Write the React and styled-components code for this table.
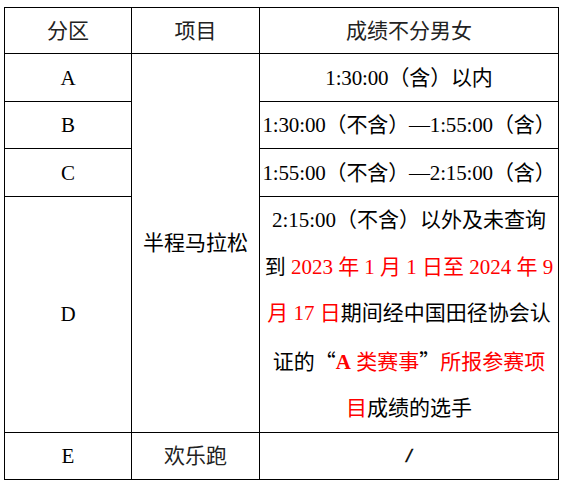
import React from "react";
import styled, { createGlobalStyle } from "styled-components";

const GlobalStyle = createGlobalStyle`
  html, body {
    margin: 0;
    padding: 0;
    background: #fff;
  }
  body {
    font-family: "Liberation Serif", "Noto Sans CJK SC", serif;
    color: #000;
  }
`;

const Page = styled.div`
  padding: 7px 0 0 4px;
`;

const Table = styled.table`
  border-collapse: collapse;
  width: 554px;
  table-layout: fixed;
  font-size: 21px;
`;

const Cell = styled.td`
  border: 1px solid #000;
  text-align: center;
  vertical-align: middle;
  height: ${({ $h }) => $h || 46}px;
  padding: 0;
  line-height: ${({ $lh }) => $lh || "24px"};
  white-space: nowrap;
  letter-spacing: ${({ $tight }) => ($tight ? "-0.15px" : "normal")};
  color: ${({ $muted }) => ($muted ? "#222" : "#000")};
`;

const Red = styled.span`
  color: #ff0000;
  font-weight: ${({ $bold }) => ($bold ? "bold" : "normal")};
`;

const Quote = styled.span`
  font-family: "Noto Sans CJK SC", serif;
`;

const Slash = styled.span`
  font-family: "Liberation Sans", sans-serif;
  font-style: italic;
  font-size: 19px;
  -webkit-text-stroke: 0.4px #000;
`;

const rows = [
  { zone: "A", text: "1:30:00（含）以内", h: 47 },
  { zone: "B", text: "1:30:00（不含）—1:55:00（含）", h: 46 },
  { zone: "C", text: "1:55:00（不含）—2:15:00（含）", h: 47 },
];

export default function App() {
  return (
    <Page>
      <GlobalStyle />
      <Table>
        <colgroup>
          <col style={{ width: 127 }} />
          <col style={{ width: 128 }} />
          <col style={{ width: 299 }} />
        </colgroup>
        <tbody>
          <tr>
            <Cell $h={45} $muted>分区</Cell>
            <Cell $h={45} $muted>项目</Cell>
            <Cell $h={45} $muted>成绩不分男女</Cell>
          </tr>
          {rows.map((r, i) => (
            <tr key={r.zone}>
              <Cell $h={r.h}>{r.zone}</Cell>
              {i === 0 && <Cell rowSpan={4}>半程马拉松</Cell>}
              <Cell $h={r.h} $tight>{r.text}</Cell>
            </tr>
          ))}
          <tr>
            <Cell $h={233}>D</Cell>
            <Cell $h={233} $lh="46.6px">
              2:15:00（不含）以外及未查询
              <br />
              到 <Red>2023 年 1 月 1 日至 2024 年 9</Red>
              <br />
              <Red>月 17 日</Red>期间经中国田径协会认
              <br />
              证的<Quote>“</Quote>
              <Red $bold>A</Red>
              <Red> 类赛事</Red>
              <Quote>”</Quote>
              <Red>所报参赛项</Red>
              <br />
              <Red>目</Red>成绩的选手
            </Cell>
          </tr>
          <tr>
            <Cell>E</Cell>
            <Cell $muted>欢乐跑</Cell>
            <Cell>
              <Slash>/</Slash>
            </Cell>
          </tr>
        </tbody>
      </Table>
    </Page>
  );
}
